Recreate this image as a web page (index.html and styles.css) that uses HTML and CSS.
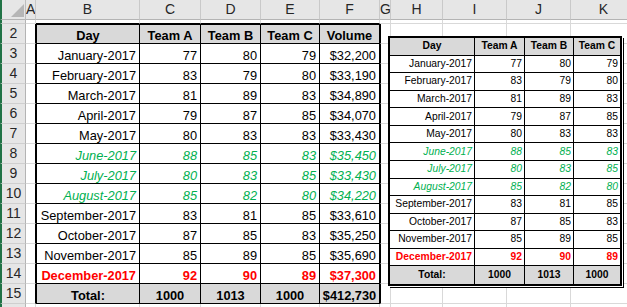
FILE: index.html
```html
<!DOCTYPE html>
<html lang="en">
<head>
<meta charset="utf-8">
<title>Sheet</title>
<link rel="stylesheet" href="styles.css">
</head>
<body>
<div class="sheet">
<table class="grid">
<colgroup>
<col class="w-rh"><col class="w-a"><col class="w-b"><col class="w-c"><col class="w-d"><col class="w-e"><col class="w-f"><col class="w-g"><col class="w-h"><col class="w-i"><col class="w-j"><col class="w-k">
</colgroup>
<tr class="hdr">
<td class="corner"><svg class="tri" width="14" height="13" viewBox="0 0 14 13"><polygon points="1,13 14,13 14,0" fill="#b6b6b6"/></svg></td>
<td class="ch">A</td><td class="ch">B</td><td class="ch">C</td><td class="ch">D</td><td class="ch">E</td><td class="ch">F</td><td class="ch">G</td><td class="ch">H</td><td class="ch">I</td><td class="ch">J</td><td class="ch">K</td>
</tr>
<tr class="r1">
<td class="rh"></td><td></td><td class="tb"></td><td class="tb"></td><td class="tb"></td><td class="tb"></td><td class="tb"></td><td></td><td></td><td></td><td></td><td></td>
</tr>
<tr class="r top">
<td class="rh">2</td><td class="ea"></td><td class="d dl hd">Day</td><td class="d hd">Team A</td><td class="d hd">Team B</td><td class="d hd">Team C</td><td class="d hd">Volume</td><td class="eg"></td><td></td><td></td><td></td><td></td>
</tr>
<tr class="r">
<td class="rh">3</td><td class="ea"></td><td class="d dl">January-2017</td><td class="d">77</td><td class="d">80</td><td class="d">79</td><td class="d">$32,200</td><td class="eg"></td><td></td><td></td><td></td><td></td>
</tr>
<tr class="r">
<td class="rh">4</td><td class="ea"></td><td class="d dl">February-2017</td><td class="d">83</td><td class="d">79</td><td class="d">80</td><td class="d">$33,190</td><td class="eg"></td><td></td><td></td><td></td><td></td>
</tr>
<tr class="r">
<td class="rh">5</td><td class="ea"></td><td class="d dl">March-2017</td><td class="d">81</td><td class="d">89</td><td class="d">83</td><td class="d">$34,890</td><td class="eg"></td><td></td><td></td><td></td><td></td>
</tr>
<tr class="r">
<td class="rh">6</td><td class="ea"></td><td class="d dl">April-2017</td><td class="d">79</td><td class="d">87</td><td class="d">85</td><td class="d">$34,070</td><td class="eg"></td><td></td><td></td><td></td><td></td>
</tr>
<tr class="r">
<td class="rh">7</td><td class="ea"></td><td class="d dl">May-2017</td><td class="d">80</td><td class="d">83</td><td class="d">83</td><td class="d">$33,430</td><td class="eg"></td><td></td><td></td><td></td><td></td>
</tr>
<tr class="r green">
<td class="rh">8</td><td class="ea"></td><td class="d dl">June-2017</td><td class="d">88</td><td class="d">85</td><td class="d">83</td><td class="d">$35,450</td><td class="eg"></td><td></td><td></td><td></td><td></td>
</tr>
<tr class="r green">
<td class="rh">9</td><td class="ea"></td><td class="d dl">July-2017</td><td class="d">80</td><td class="d">83</td><td class="d">85</td><td class="d">$33,430</td><td class="eg"></td><td></td><td></td><td></td><td></td>
</tr>
<tr class="r green">
<td class="rh">10</td><td class="ea"></td><td class="d dl">August-2017</td><td class="d">85</td><td class="d">82</td><td class="d">80</td><td class="d">$34,220</td><td class="eg"></td><td></td><td></td><td></td><td></td>
</tr>
<tr class="r">
<td class="rh">11</td><td class="ea"></td><td class="d dl">September-2017</td><td class="d">83</td><td class="d">81</td><td class="d">85</td><td class="d">$33,610</td><td class="eg"></td><td></td><td></td><td></td><td></td>
</tr>
<tr class="r">
<td class="rh">12</td><td class="ea"></td><td class="d dl">October-2017</td><td class="d">87</td><td class="d">85</td><td class="d">83</td><td class="d">$35,250</td><td class="eg"></td><td></td><td></td><td></td><td></td>
</tr>
<tr class="r">
<td class="rh">13</td><td class="ea"></td><td class="d dl">November-2017</td><td class="d">85</td><td class="d">89</td><td class="d">85</td><td class="d">$35,690</td><td class="eg"></td><td></td><td></td><td></td><td></td>
</tr>
<tr class="r red">
<td class="rh">14</td><td class="ea"></td><td class="d dl">December-2017</td><td class="d">92</td><td class="d">90</td><td class="d">89</td><td class="d">$37,300</td><td class="eg"></td><td></td><td></td><td></td><td></td>
</tr>
<tr class="r total">
<td class="rh">15</td><td class="ea"></td><td class="d dl hd">Total:</td><td class="d hd">1000</td><td class="d hd">1013</td><td class="d hd">1000</td><td class="d hd">$412,730</td><td class="eg"></td><td></td><td></td><td></td><td></td>
</tr>
<tr class="r">
<td class="rh"></td><td></td><td></td><td></td><td></td><td></td><td></td><td></td><td></td><td></td><td></td><td></td>
</tr>
</table>

<div class="pic">
<table class="ptab">
<colgroup><col class="p-day"><col class="p-a"><col class="p-b"><col class="p-c"></colgroup>
<tr class="phd"><td>Day</td><td>Team A</td><td>Team B</td><td>Team C</td></tr>
<tr><td>January-2017</td><td>77</td><td>80</td><td>79</td></tr>
<tr><td>February-2017</td><td>83</td><td>79</td><td>80</td></tr>
<tr><td>March-2017</td><td>81</td><td>89</td><td>83</td></tr>
<tr><td>April-2017</td><td>79</td><td>87</td><td>85</td></tr>
<tr><td>May-2017</td><td>80</td><td>83</td><td>83</td></tr>
<tr class="green"><td>June-2017</td><td>88</td><td>85</td><td>83</td></tr>
<tr class="green"><td>July-2017</td><td>80</td><td>83</td><td>85</td></tr>
<tr class="green"><td>August-2017</td><td>85</td><td>82</td><td>80</td></tr>
<tr><td>September-2017</td><td>83</td><td>81</td><td>85</td></tr>
<tr><td>October-2017</td><td>87</td><td>85</td><td>83</td></tr>
<tr><td>November-2017</td><td>85</td><td>89</td><td>85</td></tr>
<tr class="red"><td>December-2017</td><td>92</td><td>90</td><td>89</td></tr>
<tr class="phd"><td>Total:</td><td>1000</td><td>1013</td><td>1000</td></tr>
</table>
</div>
</div>
</body>
</html>
```
FILE: styles.css
```css
html, body {
  margin: 0;
  padding: 0;
  background: #fff;
  overflow: hidden;
}
body {
  width: 627px;
  height: 307px;
}
.sheet {
  position: relative;
  width: 637px;
}
.grid {
  table-layout: fixed;
  width: 637px;
  border-collapse: separate;
  border-spacing: 0;
  font-family: "Liberation Sans", Arial, sans-serif;
  font-size: 12.8px;
  color: #000;
}
.w-rh { width: 26px; }
.w-a { width: 10px; }
.w-b { width: 104px; }
.w-c { width: 61px; }
.w-d { width: 60px; }
.w-e { width: 59px; }
.w-f { width: 60px; }
.w-g { width: 11px; }
.w-h { width: 52px; }
.w-i { width: 64px; }
.w-j { width: 64px; }
.w-k { width: 66px; }

.grid td {
  padding: 0 3px 0 2px;
  border-right: 1px solid #d9d9d9;
  border-bottom: 1px solid #d9d9d9;
  white-space: nowrap;
  overflow: hidden;
  vertical-align: bottom;
  line-height: 15px;
  text-align: right;
}
.hdr { height: 20px; }
.r1 { height: 4px; }
.r1 td { font-size: 0; line-height: 0; }
.r { height: 20px; }

.grid td.corner {
  background: #e6e6e6;
  border-left: 2px solid #217346;
  border-right-color: #bdbdbd;
  border-bottom-color: #b4b4b4;
  padding: 0 1px 2px 0;
  line-height: 0;
  text-align: right;
}
.tri { display: inline-block; vertical-align: bottom; }

.grid td.ch {
  background: #e6e6e6;
  border-right-color: #c9c9c9;
  border-bottom-color: #b4b4b4;
  text-align: center;
  vertical-align: middle;
  line-height: 19px;
  padding: 0;
  font-size: 14px;
  color: #262626;
}
.grid td.rh {
  background: #e6e6e6;
  border-left: 2px solid #217346;
  border-right-color: #b4b4b4;
  border-bottom-color: #cfcfcf;
  text-align: center;
  vertical-align: middle;
  line-height: 19px;
  padding: 0;
  font-size: 14px;
  color: #262626;
}

.grid td.tb { border-bottom-color: #000; }
.grid td.ea { border-right-color: #000; }
.grid td.eg { border-left: 1px solid #000; }
.grid td.d {
  border-right-color: #000;
  border-bottom-color: #000;
}
.grid td.dl { border-left: 1px solid #000; }
.top td.d { border-top: 1px solid #000; }
.grid td.hd {
  background: #d9d9d9;
  font-weight: bold;
  text-align: center;
  padding: 0 1px;
}

.green td.d,
.ptab .green td {
  color: #00b050;
  font-style: italic;
}
.red td.d,
.ptab .red td {
  color: #ff0000;
  font-weight: bold;
}

.pic {
  position: absolute;
  left: 388px;
  top: 36px;
  width: 234px;
  height: 250px;
  box-sizing: border-box;
  border: 2px solid #000;
  background: #fff;
  box-shadow: 1px 1px 0 0 #fff, 2px 2px 0 0 #000;
}
.ptab {
  table-layout: fixed;
  width: 230px;
  height: 246px;
  border-collapse: separate;
  border-spacing: 0;
  font-family: "Liberation Sans", Arial, sans-serif;
  font-size: 10.3px;
  color: #000;
}
.p-day { width: 85px; }
.p-a { width: 50px; }
.p-b { width: 49px; }
.p-c { width: 46px; }
.ptab tr { height: 17.57px; }
.ptab td {
  border-right: 1px solid #000;
  border-bottom: 1px solid #000;
  padding: 0 2px 0 1px;
  text-align: right;
  vertical-align: middle;
  line-height: 12px;
  white-space: nowrap;
  overflow: hidden;
}
.ptab td:last-child { border-right: none; }
.ptab tr:last-child td { border-bottom: none; }
.ptab .phd td {
  background: #d9d9d9;
  font-weight: bold;
  text-align: center;
  padding: 0;
}
```
